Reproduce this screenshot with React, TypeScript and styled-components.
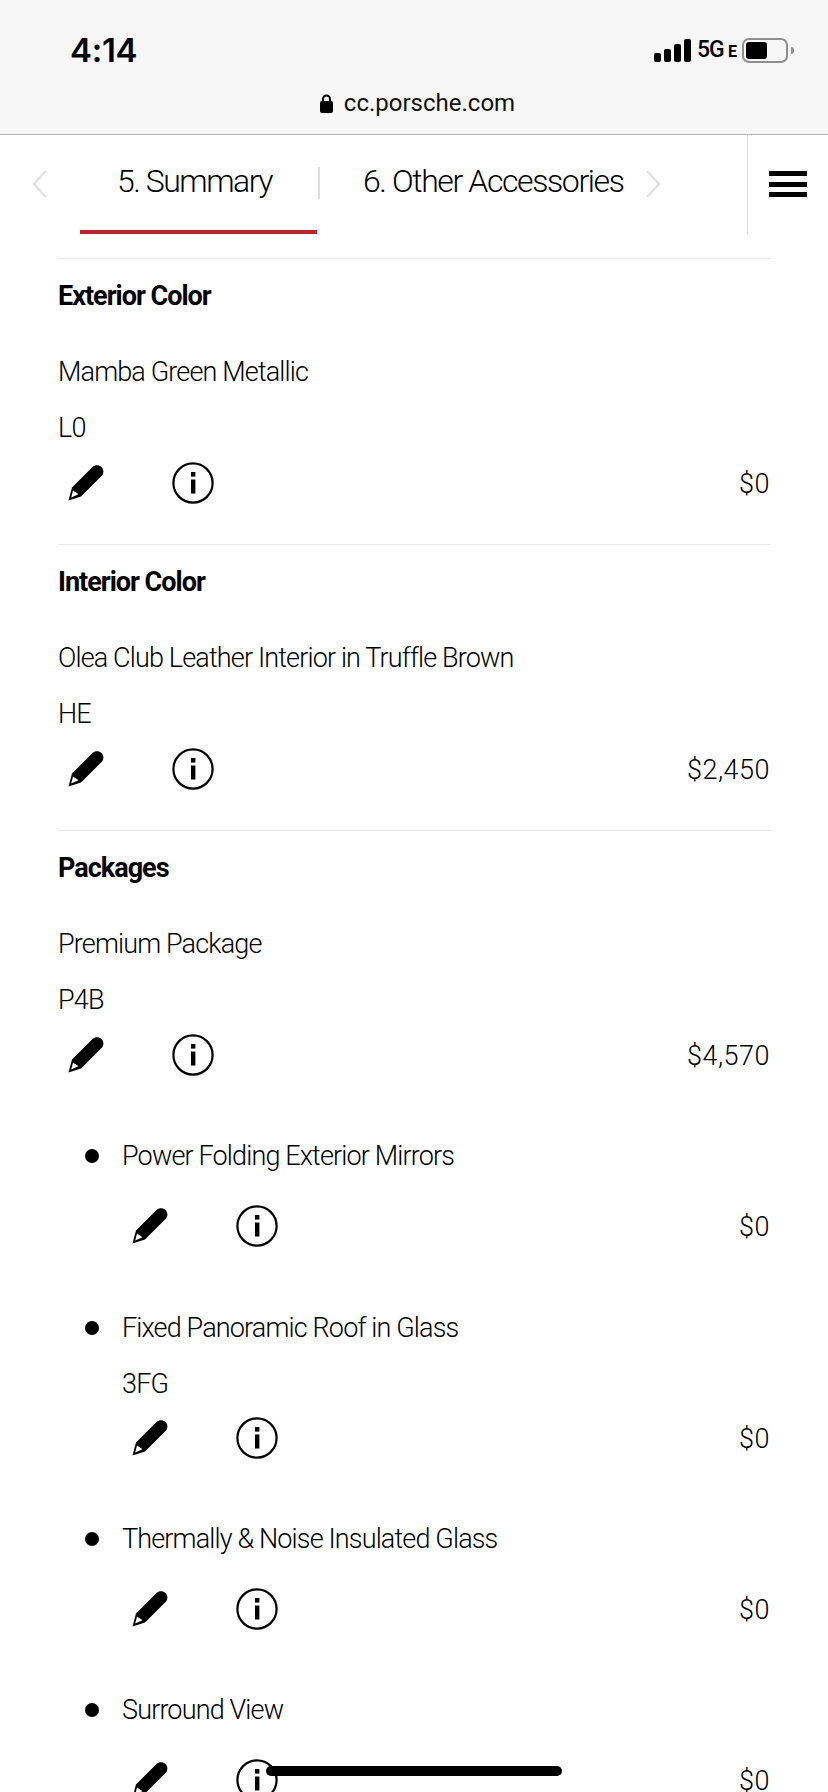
import React from "react";
import styled, { createGlobalStyle } from "styled-components";

const Global = createGlobalStyle`
  html, body { margin: 0; padding: 0; background: #fff; }
  body { font-family: "Roboto", sans-serif; color: #000; }
  #root { height: 1792px; overflow: hidden; position: relative; }
`;

const Browser = styled.header`
  height: 134px;
  background: #f7f7f7;
  border-bottom: 1px solid #b4b4b4;
  display: flex;
  flex-direction: column;
`;
const StatusBar = styled.div`
  display: flex;
  align-items: center;
  justify-content: space-between;
  height: 50px;
  margin-top: 25px;
  padding: 0 34px 0 70px;
`;
const Clock = styled.span`
  font: 600 33px/50px "Inter", sans-serif;
  letter-spacing: -0.3px;
`;
const StatusIcons = styled.div`
  display: flex;
  align-items: center;
`;
const Bars = styled.div`
  display: flex;
  align-items: flex-end;
  gap: 3px;
  height: 23px;
`;
const Bar = styled.i<{ $h: number }>`
  display: block;
  width: 7px;
  height: ${(p) => p.$h}px;
  background: #000;
  border-radius: 2px;
`;
const Net = styled.span`
  width: 26px;
  font: 500 23px/24px "Roboto", sans-serif;
  letter-spacing: -1px;
  margin-left: 6px;
  white-space: nowrap;
`;
const NetE = styled.span`
  width: 7px;
  font: 700 16px/24px "Roboto", sans-serif;
  margin-left: 5px;
  padding-top: 3px;
`;
const Battery = styled.div`
  width: 46px;
  height: 25px;
  box-sizing: border-box;
  margin-left: 7px;
  border: 2px solid #8e8e8e;
  border-radius: 7px;
  padding: 2px;
  display: flex;
`;
const BatteryFill = styled.div`
  width: 21px;
  background: #000;
  border-radius: 3px;
`;
const BatteryNub = styled.div`
  width: 3px;
  height: 7px;
  margin-left: 3px;
  background: #8e8e8e;
  border-radius: 0 3px 3px 0;
`;
const Url = styled.div`
  display: flex;
  align-items: center;
  justify-content: center;
  gap: 11px;
  height: 32px;
  margin-top: 12px;
  padding-left: 7px;
  font: 400 24px/32px "Roboto", sans-serif;
  color: #111;
`;

const Nav = styled.nav`
  display: flex;
  height: 99px;
`;
const Tabs = styled.div`
  width: 747px;
  display: flex;
`;
const Chevron = styled.div<{ $w: number; $ml: number }>`
  width: ${(p) => p.$w}px;
  margin-left: ${(p) => p.$ml}px;
  padding-top: 35px;
`;
const ActiveTab = styled.div`
  width: 237px;
  margin-left: 32px;
  padding-right: 8px;
  height: 99px;
  box-sizing: border-box;
  border-bottom: 4px solid #b22a2e;
  text-align: center;
  font-size: 32px;
  line-height: 93px;
  font-weight: 300;
  letter-spacing: -1.5px;
`;
const TabDivider = styled.div`
  width: 2px;
  height: 32px;
  margin: 32px 0 0 1px;
  background: #dedede;
`;
const Tab = styled.div`
  margin-left: 43px;
  font-size: 32px;
  line-height: 93px;
  font-weight: 300;
  letter-spacing: -1.4px;
  white-space: nowrap;
  width: 261px;
`;
const Menu = styled.div`
  flex: 1;
  border-left: 1px solid #d8d8d8;
  display: flex;
  flex-direction: column;
  gap: 5.5px;
  padding: 36px 0 0 21px;
`;
const MenuBar = styled.i`
  display: block;
  width: 38px;
  height: 5px;
  background: #000;
`;

const Content = styled.main`
  padding: 24px 57px 0 58px;
`;
const Section = styled.section`
  border-top: 1px solid #e9e9e9;
  padding: 19px 0 39px;
`;
const Title = styled.h2`
  margin: 0;
  font-size: 27px;
  line-height: 36px;
  font-weight: 700;
  letter-spacing: -1px;
`;
const Text = styled.div<{ $mt: number }>`
  margin-top: ${(p) => p.$mt}px;
  font-size: 27px;
  line-height: 36px;
  font-weight: 300;
  letter-spacing: -0.85px;
`;
const Actions = styled.div<{ $mt: number }>`
  margin-top: ${(p) => p.$mt}px;
  height: 44px;
  display: flex;
  align-items: center;
  padding: 0 1px 0 10px;
`;
const Price = styled.span`
  margin-left: auto;
  padding-top: 1px;
  font-size: 27px;
  font-weight: 300;
  letter-spacing: 0.5px;
`;
const InfoButton = styled.svg`
  margin-left: 68px;
  display: block;
`;
const Sub = styled.div<{ $mt: number }>`
  display: flex;
  align-items: flex-start;
  margin-top: ${(p) => p.$mt}px;
`;
const Bullet = styled.i`
  display: block;
  width: 14px;
  height: 14px;
  margin: 11px 23px 0 27px;
  border-radius: 50%;
  background: #000;
  flex: none;
`;
const SubBody = styled.div`
  flex: 1;
`;
const HomeBar = styled.div`
  position: absolute;
  left: 266px;
  top: 1766px;
  width: 296px;
  height: 10px;
  border-radius: 5px;
  background: #000;
`;

const Pencil = () => (
  <svg width="36" height="36" viewBox="0 0 36 36">
    <path d="M0.5 35.5 L4 22.5 L24.5 2 C27 -0.5 31 -0.5 33.5 2 C36 4.5 36 8.5 33.5 11 L13 31.5 Z" fill="#000" />
    <path d="M3.2 32.5 L5 25.5 L10.5 29.2 Z" fill="#fff" />
  </svg>
);
const Info = () => (
  <InfoButton width="42" height="42" viewBox="0 0 42 42">
    <circle cx="21" cy="21" r="19.6" fill="none" stroke="#000" strokeWidth="2.2" />
    <rect x="19" y="10" width="4.4" height="4.6" fill="#000" />
    <rect x="19" y="17.5" width="4.4" height="14" fill="#000" />
  </InfoButton>
);
const Row = ({ mt, price }: { mt: number; price: string }) => (
  <Actions $mt={mt}>
    <Pencil />
    <Info />
    <Price>{price}</Price>
  </Actions>
);
const Left = () => (
  <svg width="16" height="28" viewBox="0 0 16 28"><path d="M14 1 L2 14 L14 27" fill="none" stroke="#e2e2e2" strokeWidth="2.5" /></svg>
);
const Right = () => (
  <svg width="16" height="28" viewBox="0 0 16 28"><path d="M2 1 L14 14 L2 27" fill="none" stroke="#e2e2e2" strokeWidth="2.5" /></svg>
);

export default function App() {
  return (
    <>
      <Global />
      <Browser>
        <StatusBar>
          <Clock>4:14</Clock>
          <StatusIcons>
            <Bars>
              <Bar $h={9} />
              <Bar $h={13} />
              <Bar $h={18} />
              <Bar $h={23} />
            </Bars>
            <Net>5G</Net>
            <NetE>E</NetE>
            <Battery><BatteryFill /></Battery>
            <BatteryNub />
          </StatusIcons>
        </StatusBar>
        <Url>
          <svg width="13" height="19" viewBox="0 0 13 19">
            <path d="M3 8 V5 a3.5 3.5 0 0 1 7 0 V8" fill="none" stroke="#000" strokeWidth="2" />
            <rect x="0" y="7" width="13" height="12" rx="2" fill="#000" />
          </svg>
          <span>cc.porsche.com</span>
        </Url>
      </Browser>
      <Nav>
        <Tabs>
          <Chevron $w={16} $ml={32}><Left /></Chevron>
          <ActiveTab>5. Summary</ActiveTab>
          <TabDivider />
          <Tab>6. Other Accessories</Tab>
          <Chevron $w={16} $ml={21}><Right /></Chevron>
        </Tabs>
        <Menu><MenuBar /><MenuBar /><MenuBar /></Menu>
      </Nav>
      <Content>
        <Section>
          <Title>Exterior Color</Title>
          <Text $mt={40}>Mamba Green Metallic</Text>
          <Text $mt={20}>L0</Text>
          <Row mt={15} price="$0" />
        </Section>
        <Section>
          <Title>Interior Color</Title>
          <Text $mt={40}>Olea Club Leather Interior in Truffle Brown</Text>
          <Text $mt={20}>HE</Text>
          <Row mt={15} price="$2,450" />
        </Section>
        <Section>
          <Title>Packages</Title>
          <Text $mt={40}>Premium Package</Text>
          <Text $mt={20}>P4B</Text>
          <Row mt={15} price="$4,570" />
          <Sub $mt={61}>
            <Bullet />
            <SubBody>
              <Text $mt={0}>Power Folding Exterior Mirrors</Text>
              <Row mt={30} price="$0" />
            </SubBody>
          </Sub>
          <Sub $mt={62}>
            <Bullet />
            <SubBody>
              <Text $mt={0}>Fixed Panoramic Roof in Glass</Text>
              <Text $mt={20}>3FG</Text>
              <Row mt={14} price="$0" />
            </SubBody>
          </Sub>
          <Sub $mt={61}>
            <Bullet />
            <SubBody>
              <Text $mt={0}>Thermally &amp; Noise Insulated Glass</Text>
              <Row mt={30} price="$0" />
            </SubBody>
          </Sub>
          <Sub $mt={61}>
            <Bullet />
            <SubBody>
              <Text $mt={0}>Surround View</Text>
              <Row mt={30} price="$0" />
            </SubBody>
          </Sub>
        </Section>
      </Content>
      <HomeBar />
    </>
  );
}
